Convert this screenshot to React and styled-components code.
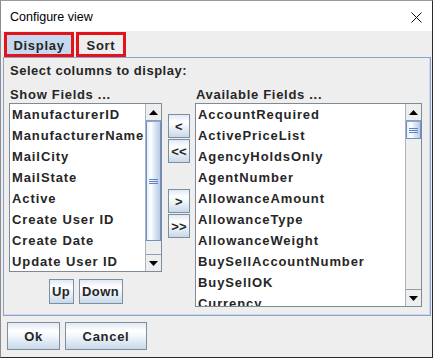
import React from "react";
import styled, { createGlobalStyle, css } from "styled-components";

const GlobalStyle = createGlobalStyle`
  html, body {
    margin: 0;
    padding: 0;
    background: #ffffff;
  }
  * {
    box-sizing: border-box;
  }
`;

const showFields = [
  "ManufacturerID",
  "ManufacturerName",
  "MailCity",
  "MailState",
  "Active",
  "Create User ID",
  "Create Date",
  "Update User ID",
];

const availableFields = [
  "AccountRequired",
  "ActivePriceList",
  "AgencyHoldsOnly",
  "AgentNumber",
  "AllowanceAmount",
  "AllowanceType",
  "AllowanceWeight",
  "BuySellAccountNumber",
  "BuySellOK",
  "Currency",
];

function App() {
  return (
    <>
      <GlobalStyle />
      <Window>
        <TitleBar>
          <Title>Configure view</Title>
          <CloseIcon viewBox="0 0 11 11">
            <path d="M0.5 0.5 L10.5 10.5 M10.5 0.5 L0.5 10.5" />
          </CloseIcon>
        </TitleBar>
        <Body>
          <Tabs>
            <Tab $active $width={70}>Display</Tab>
            <Tab $width={50}>Sort</Tab>
          </Tabs>
          <Panel>
            <Heading>Select columns to display:</Heading>
            <Columns>
              <Column $width={153}>
                <ColumnLabel>Show Fields ...</ColumnLabel>
                <ListBox $height={169}>
                  <Items>
                    {showFields.map((f) => (
                      <Item key={f}>{f}</Item>
                    ))}
                  </Items>
                  <ScrollBar thumb={120} />
                </ListBox>
                <OrderRow>
                  <SmallButton $width={25}>Up</SmallButton>
                  <SmallButton $width={44}>Down</SmallButton>
                </OrderRow>
              </Column>
              <MoveColumn>
                <MoveGroup>
                  <MoveButton>&lt;</MoveButton>
                  <MoveButton>&lt;&lt;</MoveButton>
                </MoveGroup>
                <MoveGroup>
                  <MoveButton>&gt;</MoveButton>
                  <MoveButton>&gt;&gt;</MoveButton>
                </MoveGroup>
              </MoveColumn>
              <Column $width={227}>
                <ColumnLabel>Available Fields ...</ColumnLabel>
                <ListBox $height={204}>
                  <Items>
                    {availableFields.map((f) => (
                      <Item key={f}>{f}</Item>
                    ))}
                  </Items>
                  <ScrollBar thumb={18} />
                </ListBox>
              </Column>
            </Columns>
          </Panel>
          <Footer>
            <DialogButton $width={53}>Ok</DialogButton>
            <DialogButton $width={82}>Cancel</DialogButton>
          </Footer>
        </Body>
      </Window>
    </>
  );
}

function ScrollBar({ thumb }) {
  return (
    <Bar>
      <Arrow>
        <svg width="9" height="5" viewBox="0 0 9 5">
          <path d="M4.5 0 L9 5 L0 5 Z" fill="#000" />
        </svg>
      </Arrow>
      <Thumb $height={thumb}>
        <Grip>
          <span />
          <span />
          <span />
        </Grip>
      </Thumb>
      <Track />
      <Arrow $down>
        <svg width="9" height="5" viewBox="0 0 9 5">
          <path d="M0 0 L9 0 L4.5 5 Z" fill="#000" />
        </svg>
      </Arrow>
    </Bar>
  );
}

const boldText = css`
  font-family: "Liberation Sans", Arial, sans-serif;
  font-weight: bold;
  font-size: 13px;
  letter-spacing: 0.7px;
  color: #262626;
`;

const Window = styled.div`
  width: 433px;
  height: 358px;
  display: flex;
  flex-direction: column;
  background: #eeeeee;
  border: 1px solid #2a2a2a;
  border-top-color: #9a9a9a;
  border-left-color: #8c8c8c;
  overflow: hidden;
`;

const TitleBar = styled.div`
  height: 30px;
  flex: none;
  display: flex;
  align-items: center;
  justify-content: space-between;
  padding: 0 10px 0 9px;
  background: #ffffff;
`;

const Title = styled.span`
  font-family: "Liberation Sans", Arial, sans-serif;
  font-size: 12.5px;
  color: #000;
  margin-top: 2px;
`;

const CloseIcon = styled.svg`
  width: 11px;
  height: 11px;
  margin-top: 2px;
  stroke: #111;
  stroke-width: 1;
  fill: none;
`;

const Body = styled.div`
  flex: 1;
  display: flex;
  flex-direction: column;
  padding: 1px 0 0 2px;
`;

const Tabs = styled.div`
  display: flex;
  gap: 2px;
  margin-left: 1px;
  height: 25px;
`;

const Tab = styled.div`
  ${boldText}
  width: ${(p) => p.$width}px;
  height: 25px;
  border: 3px solid #e3131b;
  display: flex;
  align-items: center;
  justify-content: center;
  padding-top: 1px;
  background: ${(p) => (p.$active ? "#c5d9ee" : "transparent")};
`;

const Panel = styled.div`
  width: 428px;
  border: 1px solid #8aa3c6;
  box-shadow: inset -1px -1px 0 #c9daee;
  padding: 5px 8px 8px 5px;
`;

const Heading = styled.div`
  ${boldText}
  letter-spacing: 0.5px;
  line-height: 16px;
  padding-left: 1px;
`;

const Columns = styled.div`
  display: flex;
  align-items: flex-start;
  margin-top: 8px;
`;

const Column = styled.div`
  width: ${(p) => p.$width}px;
  display: flex;
  flex-direction: column;
`;

const ColumnLabel = styled.div`
  ${boldText}
  line-height: 16px;
  padding-left: 1px;
`;

const ListBox = styled.div`
  height: ${(p) => p.$height}px;
  display: flex;
  background: #ffffff;
  border: 1px solid #7d8b99;
`;

const Items = styled.div`
  flex: 1;
  overflow: hidden;
  padding-left: 2px;
`;

const Item = styled.div`
  ${boldText}
  letter-spacing: 0.9px;
  height: 21px;
  line-height: 21px;
  white-space: nowrap;
`;

const Bar = styled.div`
  width: 16px;
  flex: none;
  display: flex;
  flex-direction: column;
  background: #eeeeee;
  border-left: 1px solid #a8b4c0;
`;

const Arrow = styled.div`
  height: 17px;
  flex: none;
  display: flex;
  align-items: center;
  justify-content: center;
  background: #eeeeee;
  border-${(p) => (p.$down ? "top" : "bottom")}: 1px solid #8f9eae;
`;

const Thumb = styled.div`
  height: ${(p) => p.$height}px;
  flex: none;
  display: flex;
  align-items: center;
  justify-content: center;
  border: 1px solid #6e90c4;
  border-top-color: #8aa8d6;
  background: linear-gradient(
    to right,
    #e6eef8 0%,
    #ffffff 30%,
    #dbe7f4 60%,
    #b8cde6 100%
  );
`;

const Grip = styled.div`
  display: flex;
  flex-direction: column;
  gap: 1px;

  span {
    display: block;
    width: 9px;
    height: 1px;
    background: #5f82c4;
  }
`;

const Track = styled.div`
  flex: 1;
`;

const buttonLook = css`
  ${boldText}
  display: flex;
  align-items: center;
  justify-content: center;
  padding: 0;
  border: 1px solid #7f8e9d;
  background: linear-gradient(
    to bottom,
    #dfe9f4 0%,
    #ffffff 30%,
    #f3f7fb 50%,
    #c7d8ea 100%
  );
`;

const OrderRow = styled.div`
  display: flex;
  justify-content: center;
  gap: 5px;
  margin-top: 7px;
`;

const SmallButton = styled.button`
  ${buttonLook}
  width: ${(p) => p.$width}px;
  height: 25px;
  letter-spacing: 0.4px;
`;

const MoveColumn = styled.div`
  width: 22px;
  margin: 27px 5px 0 6px;
  display: flex;
  flex-direction: column;
  gap: 26px;
`;

const MoveGroup = styled.div`
  display: flex;
  flex-direction: column;
  gap: 1px;
`;

const MoveButton = styled.button`
  ${buttonLook}
  width: 22px;
  height: 24px;
  letter-spacing: 0.2px;
`;

const Footer = styled.div`
  display: flex;
  gap: 5px;
  margin: 6px 0 0 4px;
`;

const DialogButton = styled.button`
  ${buttonLook}
  width: ${(p) => p.$width}px;
  height: 28px;
`;

export default App;
